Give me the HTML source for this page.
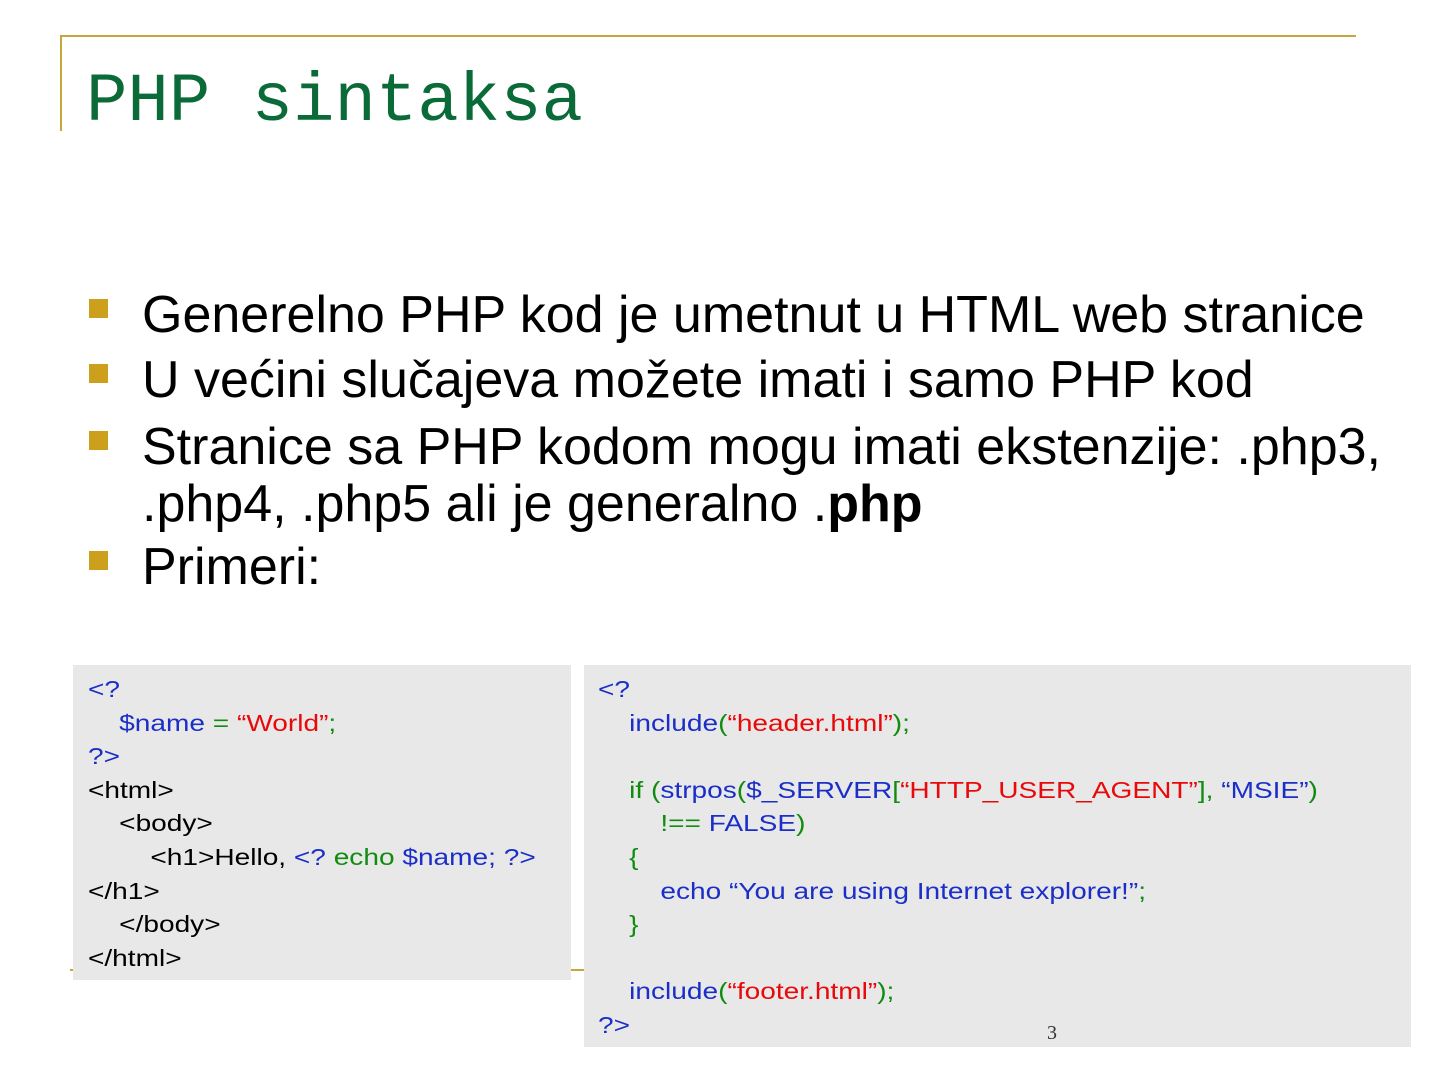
<!DOCTYPE html>
<html><head><meta charset="utf-8"><style>
body{margin:0;width:1440px;height:1080px;background:#fff;position:relative;overflow:hidden;font-family:"Liberation Sans",Arial,sans-serif}
.gl{position:absolute;background:#c6a73a}
.title{position:absolute;left:86px;top:68px;font-family:"Liberation Mono",monospace;font-size:69px;color:#0b6b38;line-height:1;white-space:nowrap}
.b{position:absolute;left:89px;width:19px;height:19px;background:#cc9f1c}
.t{position:absolute;left:142px;font-size:52px;line-height:1;color:#000;white-space:nowrap}
.box{position:absolute;background:#e8e8e8;font-size:23px;line-height:33.6px;white-space:pre}
.in{transform:scaleX(1.22);transform-origin:0 0}
.bl{color:#1b2fc8}.gr{color:#118c11}.rd{color:#e80a0a}.k{color:#000}
</style></head><body>
<div class="gl" style="left:60px;top:35px;width:1296px;height:2px"></div>
<div class="gl" style="left:60px;top:35px;width:2px;height:96px"></div>
<div class="title">PHP sintaksa</div>

<div class="b" style="top:299px"></div><div class="t" style="top:289px">Generelno PHP kod je umetnut u HTML web stranice</div>
<div class="b" style="top:364px"></div><div class="t" style="top:354px">U većini slučajeva možete imati i samo PHP kod</div>
<div class="b" style="top:431px"></div><div class="t" style="top:421px">Stranice sa PHP kodom mogu imati ekstenzije: .php3,</div>
<div class="t" style="top:478px">.php4, .php5 ali je generalno .<b>php</b></div>
<div class="b" style="top:551px"></div><div class="t" style="top:541px">Primeri:</div>

<div class="gl" style="left:70px;top:969px;width:514px;height:2px"></div>

<div class="box" style="left:73px;top:665px;height:315px;padding:8px 0 0 15px;box-sizing:border-box;width:498px"><div class="in"><span class="bl">&lt;?</span>
<span class="bl">    $name </span><span class="gr">= </span><span class="rd">“World”</span><span class="gr">;</span>
<span class="bl">?&gt;</span>
<span class="k">&lt;html&gt;</span>
<span class="k">    &lt;body&gt;</span>
<span class="k">        &lt;h1&gt;Hello, </span><span class="bl">&lt;? </span><span class="gr">echo </span><span class="bl">$name; ?&gt;</span>
<span class="k">&lt;/h1&gt;</span>
<span class="k">    &lt;/body&gt;</span>
<span class="k">&lt;/html&gt;</span></div></div>

<div class="box" style="left:584px;top:665px;width:827px;height:382px;padding:8px 0 0 14px;box-sizing:border-box"><div class="in"><span class="bl">&lt;?</span>
<span class="bl">    include</span><span class="gr">(</span><span class="rd">“header.html”</span><span class="gr">);</span>

<span class="gr">    if (</span><span class="bl">strpos</span><span class="gr">(</span><span class="bl">$_SERVER</span><span class="gr">[</span><span class="rd">“HTTP_USER_AGENT”</span><span class="gr">], </span><span class="bl">“MSIE”</span><span class="gr">)</span>
<span class="gr">        !== </span><span class="bl">FALSE</span><span class="gr">)</span>
<span class="gr">    {</span>
<span class="bl">        echo “You are using Internet explorer!”</span><span class="gr">;</span>
<span class="gr">    }</span>

<span class="bl">    include</span><span class="gr">(</span><span class="rd">“footer.html”</span><span class="gr">);</span>
<span class="bl">?&gt;</span></div></div>
<div style="position:absolute;left:1047px;top:1022px;font-family:'Liberation Serif',serif;font-size:20px;color:#333">3</div>
</body></html>
